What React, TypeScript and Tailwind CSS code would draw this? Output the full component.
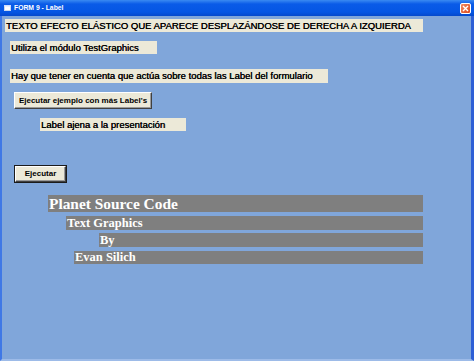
import React from "react";

const sans = { fontFamily: '"Liberation Sans", Arial, sans-serif' };
const serif = { fontFamily: '"Liberation Serif", "Times New Roman", serif' };

function Label({ className, children }: { className: string; children: React.ReactNode }) {
  return (
    <div className={`bg-[#ECE9D8] text-black text-[9.5px] pl-[1px] whitespace-nowrap overflow-hidden [text-shadow:0.3px_0_0_#000] ${className}`} style={sans}>
      {children}
    </div>
  );
}

function GrayLabel({ className, children }: { className: string; children: React.ReactNode }) {
  return (
    <div className={`bg-[#7F7F7F] text-white font-bold whitespace-nowrap overflow-hidden pl-[1px] ${className}`} style={serif}>
      {children}
    </div>
  );
}

function Button({ className, children, isDefault }: { className: string; children: React.ReactNode; isDefault?: boolean }) {
  return (
    <div className={`${isDefault ? "border border-[#1b1b1b]" : ""} ${className}`}>
      <div className="h-full w-full bg-[#ECE9D8] border-t border-l border-t-white border-l-white border-b border-r border-b-[#404040] border-r-[#404040] shadow-[inset_-1px_-1px_0_#9a9a9a] flex items-center justify-center text-[8px] font-bold text-black whitespace-nowrap" style={sans}>
        {children}
      </div>
    </div>
  );
}

export default function App() {
  return (
    <div className="w-[474px] h-[361px] flex flex-col overflow-hidden bg-[#80A6DA]">
      <div className="h-[16px] shrink-0 flex items-center bg-[linear-gradient(to_bottom,#3a8af2,#0a5be8_25%,#0556e4_75%,#0449cc)] pl-[4px] pr-[3px]">
        <svg width="7" height="6" viewBox="0 0 7 6" className="shrink-0">
          <rect x="0.5" y="0.5" width="6" height="5" fill="#ffffff" stroke="#c8d8f0" strokeWidth="1" />
          <rect x="0" y="0" width="7" height="1.5" fill="#d0e0ff" />
        </svg>
        <span className="ml-[3px] text-white font-bold text-[6.8px] leading-none" style={sans}>FORM 9 - Label</span>
        <div className="ml-auto w-[11px] h-[11px] rounded-[2px] border border-white bg-[linear-gradient(135deg,#f08a60,#dc4a20)] flex items-center justify-center">
          <svg width="7" height="7" viewBox="0 0 7 7">
            <path d="M1 1 L6 6 M6 1 L1 6" stroke="#ffffff" strokeWidth="1.4" />
          </svg>
        </div>
      </div>
      <div className="flex-1 flex flex-col items-start border-l-2 border-l-[#3F78E6] border-r-[3px] border-r-[#2D5FD6] border-b-2 border-b-[#9DBBE8]">
        <Label className="mt-[3px] ml-[3px] w-[418px] h-[13px] leading-[13px]">TEXTO EFECTO ELÁSTICO QUE APARECE DESPLAZÁNDOSE DE DERECHA A IZQUIERDA</Label>
        <Label className="mt-[9px] ml-[8px] w-[147px] h-[13px] leading-[13px]">Utiliza el módulo TestGraphics</Label>
        <Label className="mt-[15px] ml-[8px] w-[318px] h-[14px] leading-[14px]">Hay que tener en cuenta que actúa sobre todas las Label del formulario</Label>
        <Button className="mt-[9px] ml-[12px] w-[138px] h-[17px]">Ejecutar ejemplo con más Label's</Button>
        <Label className="mt-[9px] ml-[38px] w-[146px] h-[13px] leading-[13px]">Label ajena a la presentación</Label>
        <Button isDefault className="mt-[34px] ml-[12px] w-[53px] h-[18px]">Ejecutar</Button>
        <GrayLabel className="mt-[12px] ml-[46px] w-[375px] h-[17px] leading-[17px] text-[15.4px]">Planet Source Code</GrayLabel>
        <GrayLabel className="mt-[4px] ml-[64px] w-[357px] h-[14px] leading-[14px] text-[12.5px]">Text Graphics</GrayLabel>
        <GrayLabel className="mt-[3px] ml-[97px] w-[324px] h-[14px] leading-[14px] text-[12.5px]">By</GrayLabel>
        <GrayLabel className="mt-[4px] ml-[72px] w-[349px] h-[13px] leading-[13px] text-[12.5px]">Evan Silich</GrayLabel>
      </div>
    </div>
  );
}
